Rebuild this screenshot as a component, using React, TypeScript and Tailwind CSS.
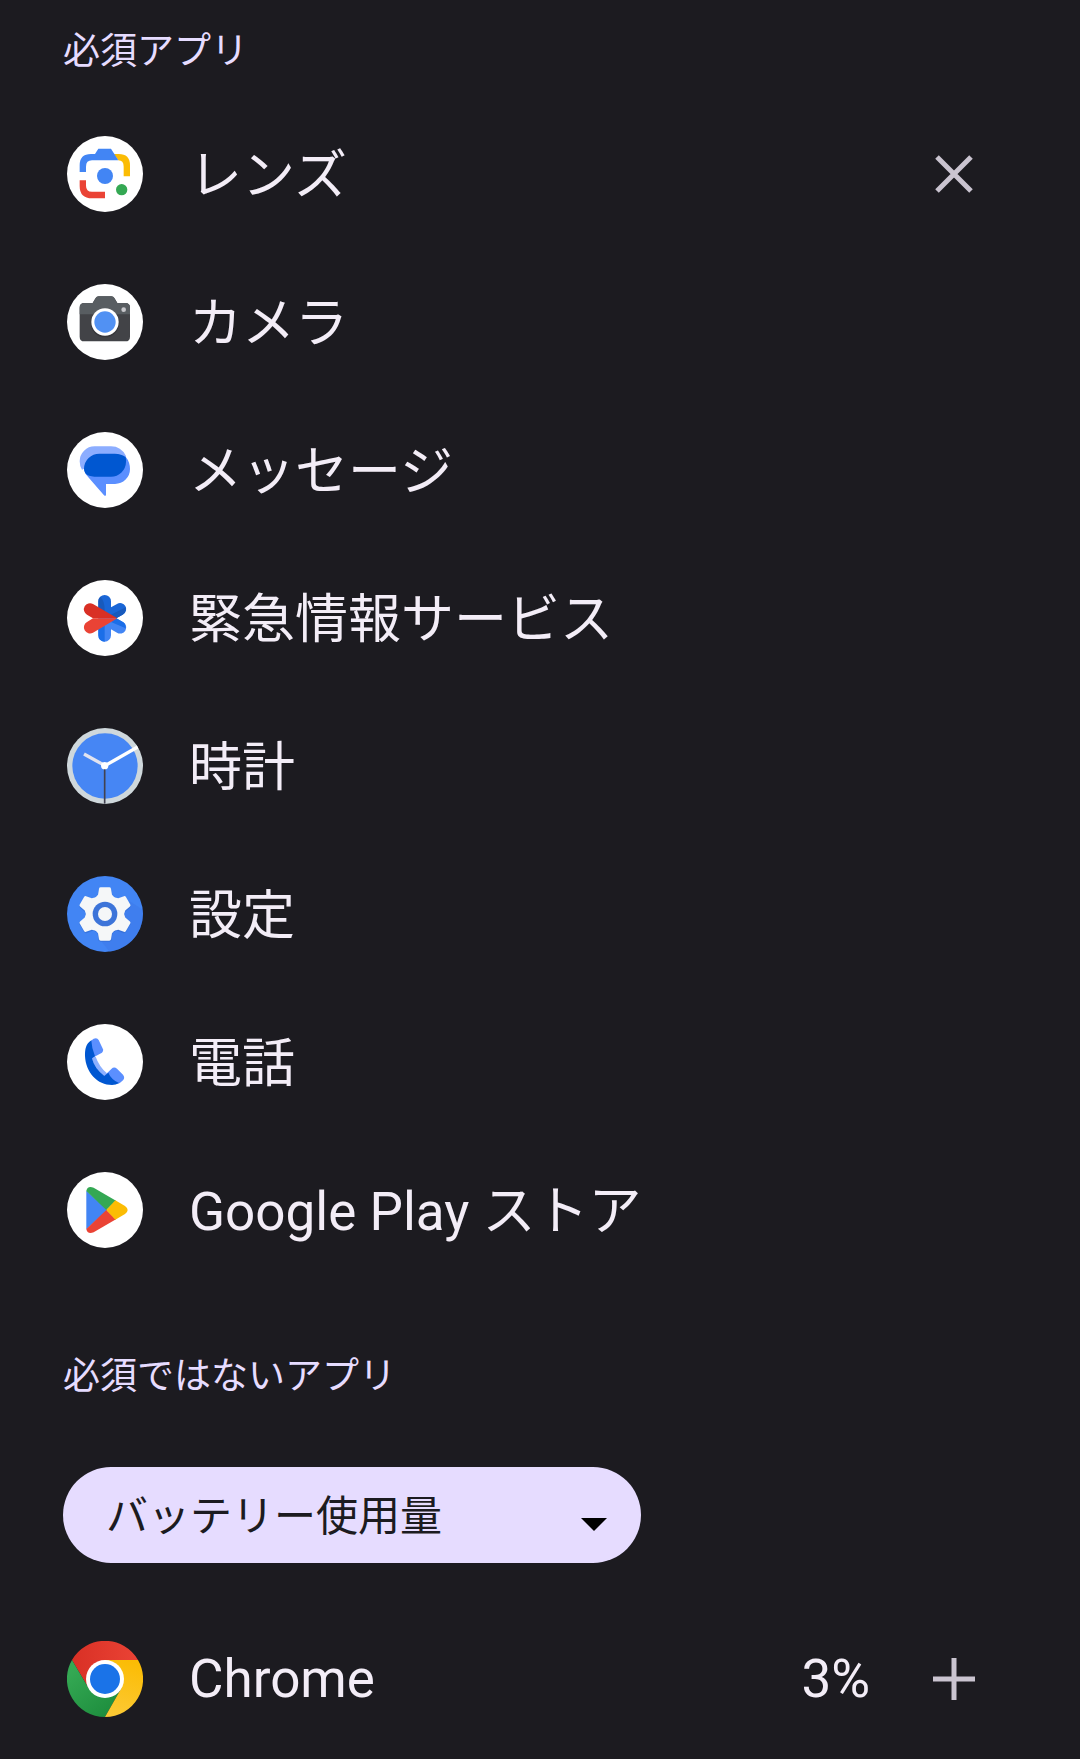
import React, { useState } from "react";

function LensIcon() {
  return (
    <svg viewBox="0 0 228 228" className="w-19 h-19 shrink-0" aria-hidden="true">
      <circle cx="114" cy="114" r="114" fill="#fff" />
      <path d="M140 54H155Q189 54 189 88V121H170V92Q170 73 154 73Z" fill="#fbbc04" />
      <path d="M38 108V88Q38 54 72 54H84L94 38H132L154 73H75Q57 73 57 92V108Z" fill="#4285f4" />
      <path d="M38 133H57V149Q57 167 75 167H114V187H75Q38 187 38 150Z" fill="#ea4335" />
      <circle cx="114" cy="120" r="24" fill="#4285f4" />
      <circle cx="164" cy="161" r="17" fill="#34a853" />
    </svg>
  );
}

function CameraIcon() {
  return (
    <svg viewBox="0 0 228 228" className="w-19 h-19 shrink-0" aria-hidden="true">
      <circle cx="114" cy="114" r="114" fill="#fff" />
      <path d="M52 57H77L86 42Q89 37 95 37H133Q139 37 142 42L151 57H175Q189 57 189 71V158Q189 172 175 172H52Q38 172 38 158V71Q38 57 52 57Z" fill="#424347" />
      <path d="M52 57H77L86 42Q89 37 95 37H133Q139 37 142 42L151 57H175Q189 57 189 71V91H38V71Q38 57 52 57Z" fill="#585d61" />
      <circle cx="114" cy="117" r="43" fill="#000" opacity="0.18" />
      <circle cx="114" cy="114" r="41" fill="#fff" />
      <circle cx="114" cy="114" r="32" fill="#5191f3" />
      <circle cx="170" cy="77" r="7" fill="#c8c8cc" />
    </svg>
  );
}

function MessagesIcon() {
  return (
    <svg viewBox="0 0 228 228" className="w-19 h-19 shrink-0" aria-hidden="true">
      <circle cx="114" cy="114" r="114" fill="#fff" />
      <path d="M83 43H132Q162 43 177 72V110H51L45 113Q38 102 38 88A45 45 0 0 1 83 43Z" fill="#8cadff" />
      <path d="M97 66H150L176 74Q189 90 189 111A45 45 0 0 1 144 156H117V188Q116 194 111 190L64 136Q54 126 51 112Z" fill="#5b8fff" />
      <path d="M97 65H143Q164 65 176 76Q178 84 177 90A45 45 0 0 1 132 134H82Q64 134 55 124Q51 118 51 110A46 46 0 0 1 97 65Z" fill="#0057d1" />
    </svg>
  );
}

function EmergencyIcon() {
  return (
    <svg viewBox="0 0 228 228" className="w-19 h-19 shrink-0" aria-hidden="true">
      <circle cx="114" cy="114" r="114" fill="#fff" />
      <path d="M94 115V64A19 19 0 0 1 132 64V82L150 72A18 18 0 0 1 169 103L148 115Z" fill="#1a66d6" />
      <path d="M94 115V64A19 19 0 0 1 100 50Q113 62 113 90V115ZM132 104L176 82Q177 98 167 104L148 115Z" fill="#185abc" />
      <path d="M94 115V166A19 19 0 0 0 132 166V148L150 158A18 18 0 0 0 169 127L148 115Z" fill="#4285f4" />
      <path d="M94 148L113 137V185Q94 184 94 166ZM132 126L148 115L169 127Q176 132 176 145Z" fill="#1b6ee8" />
      <path d="M78 72L151 115H78L60 104A18 18 0 0 1 78 72Z" fill="#d93025" />
      <path d="M78 158L151 115H78L60 126A18 18 0 0 0 78 158Z" fill="#ea4335" />
    </svg>
  );
}

function ClockIcon() {
  return (
    <svg viewBox="0 0 228 228" className="w-19 h-19 shrink-0" aria-hidden="true">
      <circle cx="114" cy="114" r="114" fill="#cfd8dc" />
      <circle cx="114" cy="114" r="98" fill="#4686f4" />
      <path d="M114 113L51 78" stroke="#e1e3ef" strokeWidth="10" />
      <path d="M114 113L212 57" stroke="#fff" strokeWidth="10" />
      <path d="M113 114V227" stroke="#424250" strokeWidth="5" />
      <circle cx="113" cy="113" r="11" fill="#fff" />
    </svg>
  );
}

function SettingsIcon() {
  return (
    <svg viewBox="0 0 228 228" className="w-19 h-19 shrink-0" aria-hidden="true">
      <circle cx="114" cy="114" r="114" fill="#4285f4" />
      <path d="M188 76L227 101A114 114 0 0 1 128 227L100 192Z" fill="#3b78e7" opacity="0.5" />
      <g transform="translate(114 117)" fill="#2f66c9" opacity="0.5">
        <circle r="58" />
        {[0, 60, 120, 180, 240, 300].map((angle) => (
          <path key={angle} d="M-14 -80H14L19 -76L23 -50H-23L-19 -76Z" transform={`rotate(${angle})`} />
        ))}
      </g>
      <g transform="translate(114 114)" fill="#f5f7f8">
        <circle r="56" />
        {[0, 60, 120, 180, 240, 300].map((angle) => (
          <path key={angle} d="M-13 -80H13Q17 -80 18 -76L21 -58L32 -46H-32L-21 -58L-18 -76Q-17 -80 -13 -80Z" transform={`rotate(${angle})`} />
        ))}
      </g>
      <circle cx="114" cy="114" r="37" fill="#3c74d9" />
      <circle cx="114" cy="114" r="21" fill="#f5f7f8" />
    </svg>
  );
}

function PhoneIcon() {
  return (
    <svg viewBox="0 0 228 228" className="w-19 h-19 shrink-0" aria-hidden="true">
      <circle cx="114" cy="114" r="114" fill="#fff" />
      <path d="M74 101L86 98Q96 127 120 148L112 158Q82 137 74 101Z" fill="#8cb0ff" />
      <path d="M72 50Q88 37 95 48L108 76Q110 82 105 86L74 103Z" fill="#5b8fff" />
      <path d="M112 155L133 135Q141 127 150 134L168 152Q175 161 168 169Q160 178 152 179Z" fill="#5b8fff" />
      <path d="M73 49C56 60 54 76 54 96C56 146 92 183 135 183Q147 183 156 177Q132 166 124 146L112 156Q82 134 75 103L84 97Q74 74 73 49Z" fill="#0057d1" />
    </svg>
  );
}

function PlayIcon() {
  return (
    <svg viewBox="0 0 228 228" className="w-19 h-19 shrink-0" aria-hidden="true">
      <circle cx="114" cy="114" r="114" fill="#fff" />
      <path d="M58 56L122 114L58 172Z" fill="#4285f4" />
      <path d="M58 57Q61 40 80 47L147 86L118 114Z" fill="#34a853" />
      <path d="M58 171Q61 188 80 181L147 142L118 114Z" fill="#ea4335" />
      <path d="M145 85L174 102Q190 114 174 126L145 143L118 114Z" fill="#fbbc04" />
    </svg>
  );
}

function ChromeIcon() {
  return (
    <svg viewBox="0 0 228 228" className="w-19 h-19 shrink-0" aria-hidden="true">
      <defs>
        <linearGradient id="chrome-red" x1="0" x2="1">
          <stop offset="0" stopColor="#d93025" />
          <stop offset="1" stopColor="#ea4335" />
        </linearGradient>
        <linearGradient id="chrome-green" x1="0.7" y1="1" x2="0.1" y2="0.2">
          <stop offset="0" stopColor="#1e8e3e" />
          <stop offset="1" stopColor="#34a853" />
        </linearGradient>
        <linearGradient id="chrome-yellow" x1="0.4" y1="1" x2="0.6" y2="0">
          <stop offset="0" stopColor="#fcc934" />
          <stop offset="1" stopColor="#fbbc04" />
        </linearGradient>
      </defs>
      <path d="M15 57A114 114 0 0 1 213 57H114V114L65 142Z" fill="url(#chrome-red)" />
      <path d="M15 57L65 142L114 114L163 142L114 228A114 114 0 0 1 15 57Z" fill="url(#chrome-green)" />
      <path d="M213 57H114V114L163 142L114 228A114 114 0 0 0 213 57Z" fill="url(#chrome-yellow)" />
      <circle cx="114" cy="114" r="57" fill="#fff" />
      <circle cx="114" cy="114" r="45" fill="#1a73e8" />
    </svg>
  );
}

const essentialApps = [
  { name: "レンズ", Icon: LensIcon, removable: true },
  { name: "カメラ", Icon: CameraIcon },
  { name: "メッセージ", Icon: MessagesIcon },
  { name: "緊急情報サービス", Icon: EmergencyIcon },
  { name: "時計", Icon: ClockIcon },
  { name: "設定", Icon: SettingsIcon },
  { name: "電話", Icon: PhoneIcon },
  { name: "Google Play ストア", Icon: PlayIcon },
];

const rowClass = "flex items-center h-[148px] pl-[67px] pr-[84px] text-[53px] leading-[76px] text-[#f3edf7]";

function App() {
  const [sort, setSort] = useState("battery");

  return (
    <main
      lang="ja"
      className="min-h-screen bg-[#1c1b20] font-[Roboto,'Noto_Sans_CJK_JP',sans-serif]"
    >
      {/* Essential apps */}
      <section>
        <h2 className="h-[100px] flex items-center pt-1 px-[63px] text-[37px] leading-[54px] text-[#e6dcff]">
          必須アプリ
        </h2>
        <ul>
          {essentialApps.map(({ name, Icon, removable }) => (
            <li key={name} className={rowClass}>
              <Icon />
              <span className="flex-1 ml-[46px] pt-1">{name}</span>
              {removable && (
                <button aria-label={name} className="w-[84px] h-[84px] flex items-center justify-center">
                  <svg viewBox="0 0 84 84" className="w-full h-full" stroke="#cac4d0" strokeWidth="5">
                    <path d="M25 25L59 59M59 25L25 59" />
                  </svg>
                </button>
              )}
            </li>
          ))}
        </ul>
      </section>

      {/* Non-essential apps */}
      <section>
        <h2 className="pt-[66px] px-[63px] text-[37px] leading-[54px] text-[#e6dcff]">
          必須ではないアプリ
        </h2>

        {/* Sort menu */}
        <div className="relative w-[578px] max-w-full ml-[63px] mt-[63px]">
          <select
            aria-label="バッテリー使用量"
            value={sort}
            onChange={(e) => setSort(e.target.value)}
            className="block appearance-none w-full h-24 pt-1 pl-[43px] pr-24 rounded-full bg-[#e6dcff] text-[#1c1b20] text-[42px] leading-[62px]"
          >
            <option value="battery">バッテリー使用量</option>
          </select>
          <svg viewBox="0 0 26 13" className="absolute right-[34px] top-[51px] w-[26px] h-[13px] pointer-events-none">
            <path d="M0 0H26L13 13Z" fill="#000" />
          </svg>
        </div>

        <ul className="pt-[42px]">
          <li className={rowClass}>
            <ChromeIcon />
            <span className="flex-1 ml-[46px]">Chrome</span>
            <span className="mr-[42px]">3%</span>
            <button aria-label="Chrome" className="w-[84px] h-[84px] flex items-center justify-center">
              <svg viewBox="0 0 84 84" className="w-full h-full" stroke="#cac4d0" strokeWidth="5">
                <path d="M21 42H63M42 21V63" />
              </svg>
            </button>
          </li>
        </ul>
      </section>
    </main>
  );
}

export default App;
